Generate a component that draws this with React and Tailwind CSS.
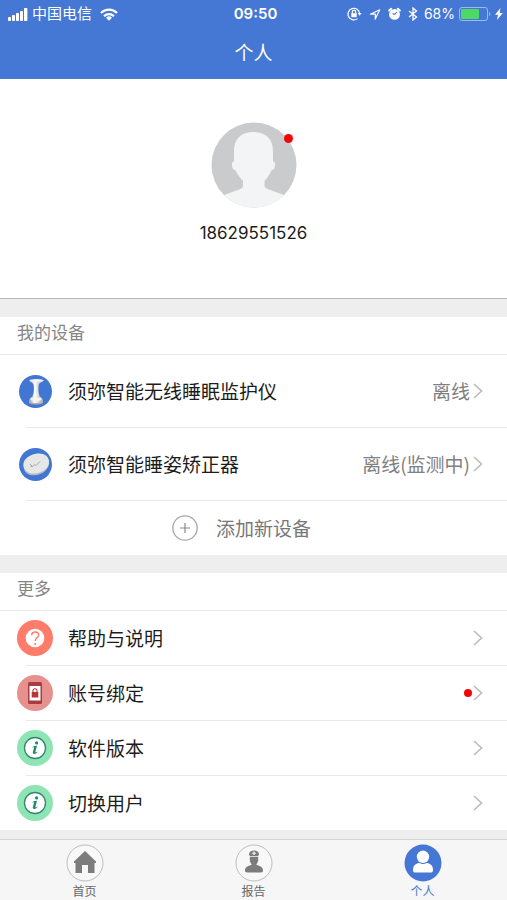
const SignalIcon = () => (
  <svg width="20" height="13" viewBox="0 0 20 13" fill="currentColor">
    <rect x="0" y="9" width="3" height="4" rx="0.8" />
    <rect x="4" y="7" width="3" height="6" rx="0.8" />
    <rect x="8" y="5" width="3" height="8" rx="0.8" />
    <rect x="12" y="3" width="3" height="10" rx="0.8" />
    <rect x="16" y="0" width="3.4" height="13" rx="0.8" />
  </svg>
);

const WifiIcon = () => (
  <svg width="18" height="13" viewBox="0 0 18 13" fill="none" stroke="currentColor" strokeWidth="2.2">
    <path d="M1 5a11.4 11.4 0 0 1 16 0" />
    <path d="M4 8.2a7 7 0 0 1 10 0" />
    <path d="M9 12.8 6 9.8a4.3 4.3 0 0 1 6 0Z" fill="currentColor" stroke="none" />
  </svg>
);

const RotationLockIcon = () => (
  <svg width="15" height="14" viewBox="0 0 15 14" fill="none" stroke="currentColor" strokeWidth="1.2">
    <path d="M10.5 11.6A5.8 5.8 0 1 1 12.6 6.5" />
    <path d="M10.6 6h4l-2 2.8Z" fill="currentColor" stroke="none" />
    <rect x="4.3" y="6.2" width="5.4" height="4" fill="currentColor" stroke="none" />
    <path d="M5.3 6.4V5a1.7 1.7 0 0 1 3.4 0v1.4" />
  </svg>
);

const LocationIcon = () => (
  <svg width="12" height="13" viewBox="0 0 13 13" fill="none" stroke="currentColor" strokeWidth="1.3" strokeLinejoin="round">
    <path d="M11.6 1.4 1.5 6.2H6.8V11.5Z" />
  </svg>
);

const AlarmIcon = () => (
  <svg width="13" height="14" viewBox="0 0 13 14" fill="none" stroke="currentColor">
    <path d="M1.2 3.6 3.2 1.8M11.8 3.6 9.8 1.8" strokeWidth="2" strokeLinecap="round" />
    <circle cx="6.5" cy="7.4" r="5.4" fill="currentColor" stroke="none" />
    <path d="M6.5 7.6 8.8 5M6.5 7.6 4.6 6.6" stroke="#4577d4" strokeWidth="1.1" />
  </svg>
);

const BluetoothIcon = () => (
  <svg width="10" height="14" viewBox="0 0 10 14" fill="none" stroke="currentColor" strokeWidth="1.3">
    <path d="m1 4 7.5 6L5 13V1l3.5 3L1 10" />
  </svg>
);

const BatteryIcon = () => (
  <svg width="32" height="14" viewBox="0 0 32 14" fill="none">
    <rect x="0.5" y="0.5" width="28" height="13" rx="2.5" stroke="#9db8ea" />
    <rect x="2" y="2" width="18" height="10" rx="1" fill="#4cd964" />
    <path d="M30 5c1.8.8 1.8 3.2 0 4Z" fill="#9db8ea" />
  </svg>
);

const BoltIcon = () => (
  <svg width="8" height="12" viewBox="0 0 8 12" fill="currentColor">
    <path d="M5.5 0 0 6.8h3L2 12l5.8-7H4.6Z" />
  </svg>
);

const Avatar = () => (
  <svg className="size-[86px]" viewBox="0 0 86 86">
    <clipPath id="avatar">
      <circle cx="43" cy="43" r="42.5" />
    </clipPath>
    <g clipPath="url(#avatar)">
      <rect width="86" height="86" fill="#c9cbcc" />
      <path
        d="M42.5 10C30 10 23 17 23 29v10.5c-2.5.5-2.500 3-1.500 6 .6 2 1.500 2.500 3 2.800C26 52.500 29 55.500 32 59V63.500c0 1.700-.8 2.700-2.500 3.400L13 73 0 82v8h86v-8l-13-9-16.500-6.100c-1.700-.7-3-1.700-3-3.400V59c3-3.500 5.500-6.500 7-10.700 1.500-.3 2.400-.8 3-2.800 1-3 1-5.500-1.500-6V29c0-12-7-19-19.500-19Z"
        fill="#f3f4f6"
      />
    </g>
  </svg>
);

const MonitorIcon = () => (
  <svg className="size-[33px]" viewBox="0 0 33 33">
    <defs>
      <linearGradient id="metal">
        <stop offset="0.1" stopColor="#aab2bf" />
        <stop offset="0.4" stopColor="#ffffff" />
        <stop offset="0.9" stopColor="#aeb3bb" />
      </linearGradient>
    </defs>
    <circle cx="16.5" cy="16.5" r="16.5" fill="#4276d3" />
    <path
      d="M10.5 5.5h14c0 1.600-4 2-4.700 4-.8 4-.4 8.500.9 12 2.300 1 3.300 2.500 3.300 5.500-3 2.200-10.500 2.200-14 0 0-3 1.300-4.500 3.500-5.500 1.400-3.500 1.800-8 1-12-.7-2-4-2.400-4-4Z"
      fill="url(#metal)"
    />
    <ellipse cx="17.5" cy="5.4" rx="7.1" ry="1.4" fill="#f4f5f7" />
    <ellipse cx="17" cy="24.3" rx="5.600" ry="1.700" fill="#f4f4f4" />
    <path d="M10 26.5c3.5 2 10.5 2 14 0V28c-3.5 2-10.5 2-14 0Z" fill="#b9ada3" />
  </svg>
);

const CorrectorIcon = () => (
  <svg className="size-[33px]" viewBox="0 0 33 33">
    <circle cx="16.5" cy="16.5" r="16.5" fill="#4276d3" />
    <path d="M4.5 19C3.5 12 11 6.5 18.5 5.8c7-.5 11 3 11.5 8 .5 7-5.500 12.500-14 13.500-7 .6-11-3.300-11.500-8.300Z" fill="#b9bcc0" />
    <path d="M4.5 17C4 11 11 6.3 18.5 5.5c6.5-.5 11 2.500 11.500 7.500.5 6.500-5.500 11.500-14 12.500-7 .6-11.200-3.500-11.500-8.500Z" fill="#e6e8e8" />
    <path d="m11 16 2.5 2.5 2.500-2 1 1 4-4M11.500 18.500h2" fill="none" stroke="#a3aaaa" />
  </svg>
);

const HelpIcon = () => (
  <svg className="size-9" viewBox="0 0 36 36">
    <circle cx="18" cy="18" r="18" fill="#ff7b6a" />
    <circle cx="18" cy="18" r="9.3" fill="#fff" />
    <path d="M14.7 15.3c0-4.5 7-4.4 7-.3 0 2.5-3.5 2.700-3.500 6" fill="none" stroke="#ff7b6a" strokeWidth="1.5" />
    <circle cx="18.2" cy="24" r="1.1" fill="#ff7b6a" />
  </svg>
);

const BindIcon = () => (
  <svg className="size-9" viewBox="0 0 36 36">
    <circle cx="18" cy="18" r="18" fill="#e6918e" />
    <rect x="11" y="7" width="14" height="22" rx="1.5" fill="#a93c40" />
    <rect x="12.5" y="11" width="11" height="14.5" fill="#fff" />
    <rect x="14.7" y="17" width="6.6" height="5.5" rx="0.5" fill="#b4363c" />
    <path d="M16 17.5v-1.7a2 2 0 0 1 4 0v1.7" fill="none" stroke="#b4363c" strokeWidth="1.1" />
  </svg>
);

const InfoIcon = () => (
  <svg className="size-9" viewBox="0 0 36 36">
    <circle cx="18" cy="18" r="18" fill="#8ce5b3" />
    <circle cx="18" cy="18" r="10.5" fill="#fff" stroke="#398671" strokeWidth="1.3" />
    <circle cx="19.6" cy="12.9" r="1.6" fill="#1f8c68" />
    <path d="M15.3 17c1.5-.8 3-1.1 4.700-1.200l-1.600 6c-.2 1 .8.6 1.800-.4l.4.5c-1.600 2.200-5.200 3-4.800.4l1.200-4.500c.2-.7-.6-.6-1.600-.3Z" fill="#1f8c68" />
  </svg>
);

const PlusIcon = () => (
  <svg className="size-[26px]" viewBox="0 0 26 26" fill="none" stroke="#a6a6a6">
    <circle cx="13" cy="13" r="12.2" strokeWidth="1.3" />
    <path d="M13 8v10M8 13h10" stroke="#8a8a8a" strokeWidth="1.2" />
  </svg>
);

const Chevron = () => (
  <svg width="10" height="16" viewBox="0 0 10 16" fill="none" stroke="#bdbdbd" strokeWidth="1.7">
    <path d="m1 1 7.5 7L1 15" />
  </svg>
);

const HomeIcon = () => (
  <svg className="size-[38px]" viewBox="0 0 38 38">
    <circle cx="19" cy="19" r="18" fill="#f8f8f8" stroke="#bdbdbd" />
    <path d="M19 7 8 17.5V19h1.5v10H16v-8h6v8h6.5V19H30v-1.5Z" fill="#7c7c7c" />
  </svg>
);

const ReportIcon = () => (
  <svg className="size-[38px]" viewBox="0 0 38 38">
    <circle cx="19" cy="19" r="18" fill="#f8f8f8" stroke="#bdbdbd" />
    <path d="M14 10.5C14 8 16 6.500 19 6.500s5 1.500 5 4l-.8 1.500h-8.400Z" fill="#7c7c7c" />
    <path d="M19 7.5v3.6M17.2 9.300h3.600" stroke="#fff" strokeWidth="1.1" />
    <path
      d="M14.8 12.8h8.400v3c0 2-.8 3.400-1.700 4.200v1c3.500.8 6.500 2.300 6.500 5.300 0 1.500-.7 2.200-2 2.200H12c-1.300 0-2-.7-2-2.200 0-3 3-4.500 6.500-5.300v-1c-.9-.8-1.700-2.200-1.700-4.200Z"
      fill="#7c7c7c"
    />
  </svg>
);

const PersonIcon = () => (
  <svg className="size-[38px]" viewBox="0 0 38 38">
    <circle cx="19" cy="19" r="18.5" fill="#4577d4" />
    <circle cx="19" cy="12.8" r="6.2" fill="#fff" />
    <path d="M9 26c0-5 3.5-7 6.5-7 2 1.300 5 1.300 7 0 3 0 6.500 2 6.500 7 0 2-.8 2.500-2.500 2.500h-15C9.800 28.500 9 28 9 26Z" fill="#fff" />
  </svg>
);

const devices = [
  { name: '须弥智能无线睡眠监护仪', status: '离线', Icon: MonitorIcon },
  { name: '须弥智能睡姿矫正器', status: '离线(监测中)', Icon: CorrectorIcon },
];

const moreItems = [
  { name: '帮助与说明', Icon: HelpIcon },
  { name: '账号绑定', Icon: BindIcon, hasDot: true },
  { name: '软件版本', Icon: InfoIcon },
  { name: '切换用户', Icon: InfoIcon },
];

const tabs = [
  { name: '首页', Icon: HomeIcon },
  { name: '报告', Icon: ReportIcon },
  { name: '个人', Icon: PersonIcon, active: true },
];

function StatusBar() {
  return (
    <div className="grid h-7 grid-cols-[1fr_auto_1fr] items-center pl-2 pr-1 font-[Inter,'Noto_Sans_CJK_SC',sans-serif] text-[15px]">
      <div className="flex items-center gap-1">
        <SignalIcon />
        <span>中国电信</span>
        <span className="pl-1">
          <WifiIcon />
        </span>
      </div>
      <span className="font-semibold">09:50</span>
      <div className="flex items-center justify-end gap-[7px]">
        <RotationLockIcon />
        <LocationIcon />
        <AlarmIcon />
        <div className="flex items-center gap-1">
          <BluetoothIcon />
          <span className="pl-0.5 text-sm">68%</span>
          <BatteryIcon />
          <BoltIcon />
        </div>
      </div>
    </div>
  );
}

function SectionTitle({ children }) {
  return (
    <h2 className="h-[38px] border-b border-[#e9e9e9] px-[17px] pt-[3px] text-[17px] leading-6 text-[#858585]">
      {children}
    </h2>
  );
}

function App() {
  return (
    <div className="flex min-h-screen flex-col bg-[#eeeeee] font-['Noto_Sans_CJK_SC',sans-serif] text-[#1c1c1c]">
      <header className="bg-[#4577d4] text-white">
        <StatusBar />
        <h1 className="h-[51px] pt-3 text-center text-[19px] leading-6">个人</h1>
      </header>

      <main className="flex flex-col gap-[18px]">
        <section className="flex h-[220px] flex-col items-center gap-[13px] border-b border-[#b8b8b8] bg-white pt-[43px]">
          <button className="relative" aria-label="头像">
            <Avatar />
            <span className="absolute right-1 top-3 size-[9px] rounded-full bg-[#fb0007]" />
          </button>
          <p className="font-[Inter,sans-serif] text-[17px] leading-6">18629551526</p>
        </section>

        <section className="bg-white">
          <SectionTitle>我的设备</SectionTitle>
          <ul>
            {devices.map(({ name, status, Icon }) => (
              <li key={name}>
                <button className="flex h-[72px] w-full items-center pl-[19px] pr-6 text-[19px]">
                  <Icon />
                  <span className="ml-4 flex-1 text-left">{name}</span>
                  <span className="mr-[3px] text-[#808080]">{status}</span>
                  <Chevron />
                </button>
                <div className="ml-[26px] border-b border-[#e9e9e9]" />
              </li>
            ))}
          </ul>
          <button className="flex h-[54px] w-full items-center justify-center gap-[18px] pr-6 text-[19px] text-[#787878]">
            <PlusIcon />
            添加新设备
          </button>
        </section>

        <section className="bg-white">
          <SectionTitle>更多</SectionTitle>
          <ul>
            {moreItems.map(({ name, Icon, hasDot }, i) => (
              <li key={name}>
                <button className="flex h-[54px] w-full items-center pl-[17px] pr-6 text-[19px]">
                  <Icon />
                  <span className="ml-[15px] flex-1 text-left">{name}</span>
                  {hasDot && <span className="mr-px size-2 rounded-full bg-[#fb0007]" />}
                  <Chevron />
                </button>
                {i < moreItems.length - 1 && <div className="ml-[26px] border-b border-[#e9e9e9]" />}
              </li>
            ))}
          </ul>
        </section>
      </main>

      <nav className="mt-auto grid h-[61px] grid-cols-3 border-t border-[#d4d4d4] bg-[#f6f6f6]">
        {tabs.map(({ name, Icon, active }) => (
          <a
            key={name}
            href="#"
            className={`flex flex-col items-center gap-px pt-1 text-xs ${active ? 'text-[#4577d4]' : 'text-[#666666]'}`}
          >
            <Icon />
            <span>{name}</span>
          </a>
        ))}
      </nav>
    </div>
  );
}

export default App;
